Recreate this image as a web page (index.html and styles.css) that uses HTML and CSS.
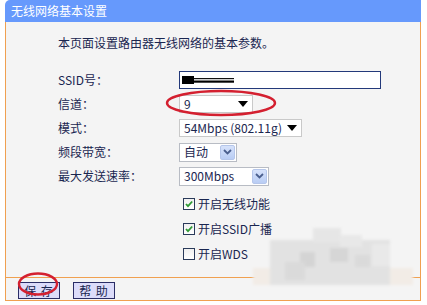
FILE: index.html
```html
<!DOCTYPE html>
<html lang="zh">
<head>
<meta charset="utf-8">
<title>无线网络基本设置</title>
<link rel="stylesheet" href="styles.css">
</head>
<body>
<div class="page">
  <div class="title">无线网络基本设置</div>
  <div class="panel">
    <div class="content">
      <p class="intro">本页面设置路由器无线网络的基本参数。</p>
      <div class="form">
        <div class="row">
          <span class="label">SSID号：</span>
          <div class="input">
            <svg class="redact" width="52" height="9" viewBox="0 0 52 9">
              <rect x="0" y="0" width="12" height="8" fill="#000"/>
              <rect x="12" y="2" width="40" height="1.2" fill="#111"/>
              <rect x="12" y="4.5" width="40" height="2.2" fill="#000"/>
            </svg>
          </div>
        </div>
        <div class="row">
          <span class="label">信道：</span>
          <div class="select sel-channel"><span class="val">9</span><span class="tri"></span></div>
        </div>
        <div class="row">
          <span class="label">模式：</span>
          <div class="select sel-mode"><span class="val">54Mbps (802.11g)</span><span class="tri"></span></div>
        </div>
        <div class="row">
          <span class="label">频段带宽：</span>
          <div class="select sel-bw"><span class="val">自动</span>
            <span class="chev"><svg width="9" height="6" viewBox="0 0 9 6"><path d="M1 1 L4.5 4.5 L8 1" fill="none" stroke="#4a5f8e" stroke-width="1.8"/></svg></span>
          </div>
        </div>
        <div class="row">
          <span class="label">最大发送速率：</span>
          <div class="select sel-rate"><span class="val">300Mbps</span>
            <span class="chev"><svg width="9" height="6" viewBox="0 0 9 6"><path d="M1 1 L4.5 4.5 L8 1" fill="none" stroke="#4a5f8e" stroke-width="1.8"/></svg></span>
          </div>
        </div>
      </div>
      <div class="checks">
        <div class="check-row">
          <span class="box"><svg width="10" height="10" viewBox="0 0 10 10"><path d="M2 5 L4 7.2 L8.2 2.5" fill="none" stroke="#2f9a35" stroke-width="1.8"/></svg></span>
          <span class="ctext">开启无线功能</span>
        </div>
        <div class="check-row">
          <span class="box"><svg width="10" height="10" viewBox="0 0 10 10"><path d="M2 5 L4 7.2 L8.2 2.5" fill="none" stroke="#2f9a35" stroke-width="1.8"/></svg></span>
          <span class="ctext">开启SSID广播</span>
        </div>
        <div class="check-row">
          <span class="box"></span>
          <span class="ctext">开启WDS</span>
        </div>
      </div>
    </div>
    <div class="bar">
      <button class="btn">保&nbsp;存</button>
      <button class="btn">帮&nbsp;助</button>
    </div>
  </div>
  <svg class="overlay" width="427" height="305" viewBox="0 0 427 305">
    <defs>
      <filter id="soft" x="-20%" y="-20%" width="140%" height="140%">
        <feGaussianBlur stdDeviation="1.4"/>
      </filter>
    </defs>
    <g filter="url(#soft)">
      <rect x="253" y="268" width="160" height="17" fill="#f2ece6"/>
      <rect x="270" y="240" width="120" height="45" fill="#e2e2e2"/>
      <rect x="313" y="228" width="28" height="14" fill="#e6e6e6"/>
      <rect x="300" y="252" width="15" height="15" fill="#d4d4d4"/>
      <rect x="330" y="248" width="18" height="14" fill="#d6d6d6"/>
      <rect x="355" y="255" width="15" height="12" fill="#dadada"/>
      <rect x="285" y="262" width="20" height="18" fill="#dadada"/>
      <rect x="340" y="235" width="22" height="12" fill="#e8e8e8"/>
      <rect x="372" y="244" width="18" height="22" fill="#e9e9e9"/>
    </g>
    <ellipse cx="221" cy="103" rx="54" ry="12" fill="none" stroke="#d42030" stroke-width="2.4"/>
    <ellipse cx="38" cy="284" rx="19" ry="10.5" fill="none" stroke="#d42030" stroke-width="2.4"/>
  </svg>
</div>
</body>
</html>
```
FILE: styles.css
```css
* { box-sizing: border-box; }

html, body {
  margin: 0;
  padding: 0;
  background: #ffffff;
}

body {
  font-family: "Noto Sans CJK SC", "Noto Sans", sans-serif;
  font-size: 12px;
  color: #1a2650;
}

.page {
  position: relative;
  width: 427px;
  height: 305px;
  padding-left: 5px;
  overflow: hidden;
}

.title {
  width: 416px;
  height: 22px;
  line-height: 22px;
  background: #6699fc;
  color: #ffffff;
  font-size: 12px;
  padding-left: 6px;
  border-top-left-radius: 5px;
}

.panel {
  width: 416px;
  background: #f4f4f4;
  border-left: 1px solid #f0a050;
  border-right: 1px solid #f0a050;
  border-bottom: 1px solid #f0a050;
}

.content {
  padding: 13px 0 11px 52px;
}

.intro {
  margin: 0;
  line-height: 16px;
  height: 16px;
}

.form {
  margin-top: 17px;
  display: flex;
  flex-direction: column;
}

.row {
  height: 24px;
  display: flex;
  align-items: center;
}

.label {
  width: 121px;
  flex: none;
  line-height: 16px;
}

.input {
  width: 202px;
  height: 18px;
  border: 1px solid #23397a;
  background: #ffffff;
  display: flex;
  align-items: center;
  padding-left: 2px;
}

.redact { display: block; margin-top: 1px; }

.select {
  height: 18px;
  background: #ffffff;
  border: 1px solid #c9c9c9;
  display: flex;
  align-items: center;
  justify-content: space-between;
  padding-left: 4px;
  line-height: 16px;
}

.sel-channel { width: 74px; padding-right: 4px; }
.sel-mode { width: 123px; padding-right: 4px; }
.sel-bw { width: 58px; height: 19px; border-color: #b8bcc4; padding-right: 1px; }
.sel-rate { width: 90px; height: 19px; border-color: #b8bcc4; padding-right: 1px; }

.tri {
  width: 0;
  height: 0;
  border-left: 5px solid transparent;
  border-right: 5px solid transparent;
  border-top: 6px solid #000000;
}

.chev {
  width: 15px;
  height: 15px;
  background: linear-gradient(#d6e2fb, #b9cdf4);
  border: 1px solid #b5c6ea;
  border-radius: 2px;
  display: flex;
  align-items: center;
  justify-content: center;
}

.checks {
  margin-top: 3px;
  padding-left: 125px;
  display: flex;
  flex-direction: column;
}

.check-row {
  height: 25px;
  display: flex;
  align-items: center;
  gap: 3px;
}

.box {
  width: 12px;
  height: 12px;
  border: 1px solid #2a3a5a;
  background: linear-gradient(#f0f0f0, #ffffff);
  display: flex;
  align-items: center;
  justify-content: center;
}

.ctext { line-height: 16px; }

.bar {
  border-top: 1px solid #f0a050;
  height: 23px;
  padding: 4px 0 0 12px;
  display: flex;
  gap: 13px;
  align-items: flex-start;
}

.btn {
  width: 42px;
  height: 17px;
  padding: 0;
  margin: 0;
  border: 1px solid #2a2d66;
  background: #dcdcfa;
  color: #1a2650;
  font-family: "Noto Sans CJK SC", "Noto Sans", sans-serif;
  font-size: 12px;
  line-height: 15px;
  letter-spacing: 1px;
}

.overlay {
  position: absolute;
  left: 0;
  top: 0;
  pointer-events: none;
}
```
